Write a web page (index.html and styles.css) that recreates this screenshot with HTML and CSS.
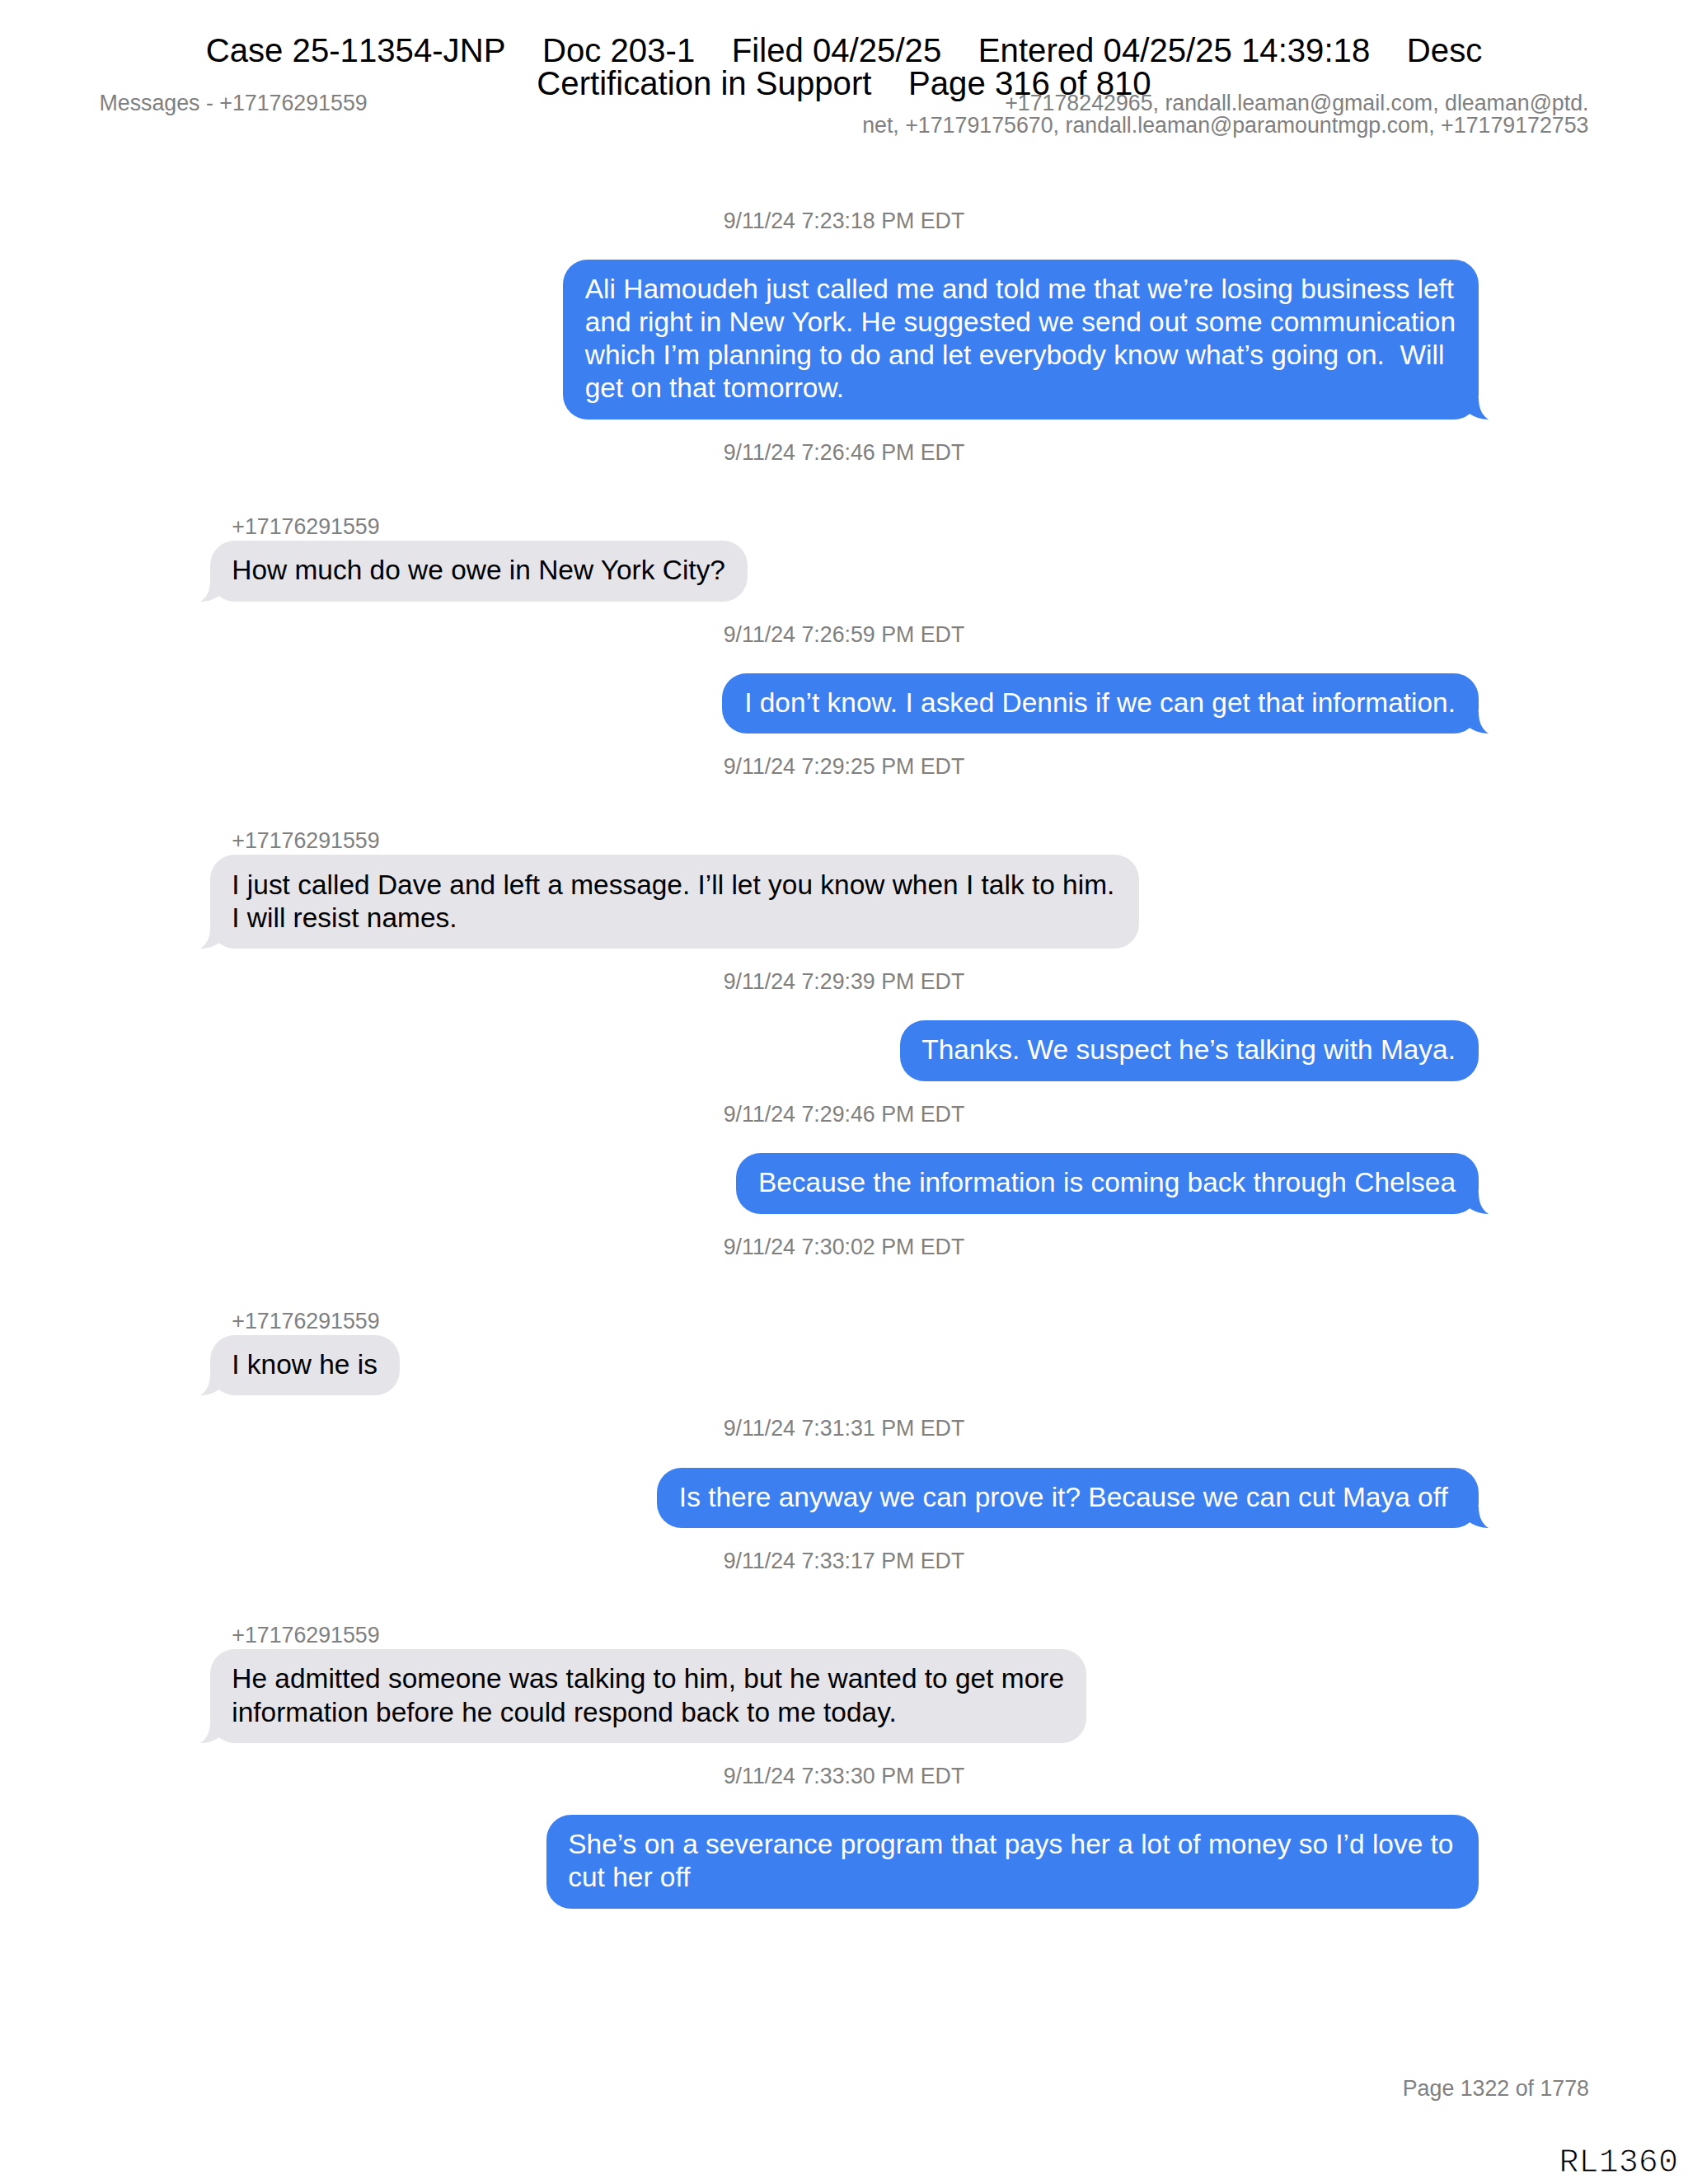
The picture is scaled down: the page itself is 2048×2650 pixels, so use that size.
FILE: index.html
```
<!DOCTYPE html>
<html lang="en">
<head>
  <meta charset="UTF-8" />
  <meta name="viewport" content="width=device-width, initial-scale=1.0" />
  <title>Messages - +17176291559</title>
  <link rel="stylesheet" href="styles.css">
</head>
<body>
  <div class="page">
    <!-- court filing stamp, printed over the page header -->
    <div class="filing-stamp">
      <p class="stamp-line">Case 25-11354-JNP    Doc 203-1    Filed 04/25/25    Entered 04/25/25 14:39:18    Desc</p>
      <p class="stamp-line">Certification in Support    Page 316 of 810</p>
    </div>

    <header class="page-header">
      <span>Messages - +17176291559</span>
      <span class="participants">+17178242965, randall.leaman@gmail.com, dleaman@ptd.<br>net, +17179175670, randall.leaman@paramountmgp.com, +17179172753</span>
    </header>

    <main class="chat">
      <time>9/11/24 7:23:18 PM EDT</time>
      <div class="bubble sent"><p>Ali Hamoudeh just called me and told me that we’re losing business left<br>and right in New York. He suggested we send out some communication<br>which I’m planning to do and let everybody know what’s going on.&nbsp; Will<br>get on that tomorrow.</p><svg class="tail" viewBox="0 0 26 26"><path d="M0 0H14C14 12 18 21 26 26C17 26 9 23 3 19L0 20Z"/></svg></div>

      <time>9/11/24 7:26:46 PM EDT</time>
      <div class="sender">+17176291559</div>
      <div class="bubble received"><p>How much do we owe in New York City?</p><svg class="tail" viewBox="0 0 26 26"><path d="M0 0H14C14 12 18 21 26 26C17 26 9 23 3 19L0 20Z"/></svg></div>

      <time>9/11/24 7:26:59 PM EDT</time>
      <div class="bubble sent"><p>I don’t know. I asked Dennis if we can get that information.</p><svg class="tail" viewBox="0 0 26 26"><path d="M0 0H14C14 12 18 21 26 26C17 26 9 23 3 19L0 20Z"/></svg></div>

      <time>9/11/24 7:29:25 PM EDT</time>
      <div class="sender">+17176291559</div>
      <div class="bubble received wide"><p>I just called Dave and left a message. I’ll let you know when I talk to him.<br>I will resist names.</p><svg class="tail" viewBox="0 0 26 26"><path d="M0 0H14C14 12 18 21 26 26C17 26 9 23 3 19L0 20Z"/></svg></div>

      <time>9/11/24 7:29:39 PM EDT</time>
      <div class="bubble sent"><p>Thanks. We suspect he’s talking with Maya.</p></div>

      <time>9/11/24 7:29:46 PM EDT</time>
      <div class="bubble sent"><p>Because the information is coming back through Chelsea</p><svg class="tail" viewBox="0 0 26 26"><path d="M0 0H14C14 12 18 21 26 26C17 26 9 23 3 19L0 20Z"/></svg></div>

      <time>9/11/24 7:30:02 PM EDT</time>
      <div class="sender">+17176291559</div>
      <div class="bubble received"><p>I know he is</p><svg class="tail" viewBox="0 0 26 26"><path d="M0 0H14C14 12 18 21 26 26C17 26 9 23 3 19L0 20Z"/></svg></div>

      <time>9/11/24 7:31:31 PM EDT</time>
      <div class="bubble sent"><p>Is there anyway we can prove it? Because we can cut Maya off&nbsp;</p><svg class="tail" viewBox="0 0 26 26"><path d="M0 0H14C14 12 18 21 26 26C17 26 9 23 3 19L0 20Z"/></svg></div>

      <time>9/11/24 7:33:17 PM EDT</time>
      <div class="sender">+17176291559</div>
      <div class="bubble received"><p>He admitted someone was talking to him, but he wanted to get more<br>information before he could respond back to me today.</p><svg class="tail" viewBox="0 0 26 26"><path d="M0 0H14C14 12 18 21 26 26C17 26 9 23 3 19L0 20Z"/></svg></div>

      <time>9/11/24 7:33:30 PM EDT</time>
      <div class="bubble sent wide"><p>She’s on a severance program that pays her a lot of money so I’d love to<br>cut her off</p></div>
    </main>

    <footer class="page-footer">
      <div class="page-number">Page 1322 of 1778</div>
      <div class="bates">RL1360</div>
    </footer>
  </div>
</body>
</html>
```

FILE: styles.css
```
* {
  box-sizing: border-box;
}
body {
  margin: 0;
  background-color: #fff;
  color: #000;
  font-family: "Liberation Sans", Arial, sans-serif;
}
p {
  margin: 0;
}
.page {
  position: relative;
  display: flex;
  flex-direction: column;
  width: 2048px;
  height: 2650px;
  padding-top: 112px;
  overflow: hidden;
}
.filing-stamp {
  position: absolute;
  top: 42px;
  left: 0;
  width: 100%;
  font-size: 40.15px;
  font-kerning: none;
  line-height: 40.15px;
  text-align: center;
}
.stamp-line {
  white-space: pre;
}
.page-header {
  display: flex;
  justify-content: space-between;
  height: 54px;
  padding: 0 120.5px;
  color: #808080;
  font-size: 26.77px;
  line-height: 26.77px;
}
.participants {
  text-align: right;
}
.chat {
  display: flex;
  flex-direction: column;
  flex: 1;
  padding: 86.6px 254.5px 0 254.5px;
}
.chat time {
  align-self: center;
  margin: 25px 0 31.15px;
  color: #808080;
  font-size: 26.77px;
  line-height: 31px;
}
.chat time:first-child {
  margin-top: 0;
}
.sender {
  margin-top: 27px;
  padding-left: 26.77px;
  color: #808080;
  font-size: 26.77px;
  line-height: 33px;
}
.bubble {
  position: relative;
  padding: 16.2px 26.77px 17.26px;
  border-radius: 30px;
  font-size: 33.46px;
  line-height: 40.15px;
  white-space: nowrap;
}
.sent {
  align-self: flex-end;
  padding-right: 27.5px;
  background-color: #3c7ff0;
  color: #fff;
}
.received {
  align-self: flex-start;
  background-color: #e5e4e9;
}
.received.wide {
  min-width: 1127.5px;
}
.sent.wide {
  min-width: 1131px;
}
.tail {
  position: absolute;
  right: -12px;
  bottom: 0;
  width: 26px;
  height: 26px;
  fill: #3c7ff0;
}
.received .tail {
  right: auto;
  left: -12px;
  fill: #e5e4e9;
  transform: scaleX(-1);
}
.page-footer {
  display: flex;
  flex-direction: column;
  align-items: flex-end;
  height: 131px;
}
.page-number {
  margin-right: 120px;
  color: #808080;
  font-size: 26.77px;
  line-height: 31px;
}
.bates {
  margin: 52px 12px 0 0;
  font-family: "Liberation Mono", "Courier New", monospace;
  font-size: 40.15px;
  line-height: 46px;
  /* thin the strokes, the stamp is a light Courier */
  -webkit-text-stroke: 1px #fff;
}
```
